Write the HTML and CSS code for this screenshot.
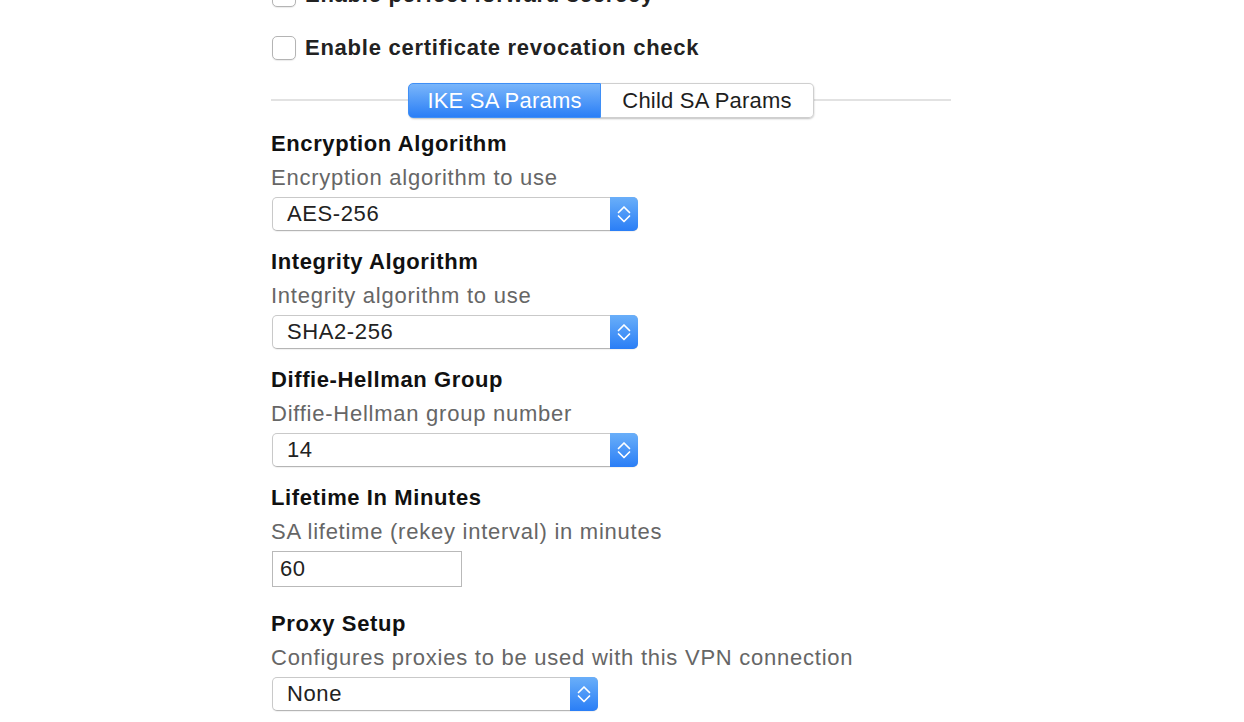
FILE: index.html
```html
<!DOCTYPE html>
<html lang="en">
<head>
    <meta charset="UTF-8">
    <meta name="viewport" content="width=device-width, initial-scale=1.0">
    <title>VPN Settings</title>
    <link rel="stylesheet" href="styles.css">
</head>
<body>

<div class="form">
    <label class="check-row">
        <span class="checkbox"></span>
        <span class="check-label">Enable perfect forward secrecy</span>
    </label>
    <label class="check-row">
        <span class="checkbox"></span>
        <span class="check-label">Enable certificate revocation check</span>
    </label>

    <div class="tabs">
        <div class="segmented">
            <span class="segment active">IKE SA Params</span>
            <span class="segment">Child SA Params</span>
        </div>
    </div>

    <div class="field">
        <div class="field-title">Encryption Algorithm</div>
        <div class="field-desc">Encryption algorithm to use</div>
        <div class="popup wide">
            <span class="popup-value">AES-256</span>
            <span class="popup-arrows">
                <svg width="14" height="20" viewBox="0 0 14 20"><path d="M1.5 8.5 L7 3 L12.5 8.5 M1.5 12 L7 17.5 L12.5 12" fill="none" stroke="#fff" stroke-width="1.7" stroke-linecap="round" stroke-linejoin="round"/></svg>
            </span>
        </div>
    </div>

    <div class="field">
        <div class="field-title">Integrity Algorithm</div>
        <div class="field-desc">Integrity algorithm to use</div>
        <div class="popup wide">
            <span class="popup-value">SHA2-256</span>
            <span class="popup-arrows">
                <svg width="14" height="20" viewBox="0 0 14 20"><path d="M1.5 8.5 L7 3 L12.5 8.5 M1.5 12 L7 17.5 L12.5 12" fill="none" stroke="#fff" stroke-width="1.7" stroke-linecap="round" stroke-linejoin="round"/></svg>
            </span>
        </div>
    </div>

    <div class="field">
        <div class="field-title">Diffie-Hellman Group</div>
        <div class="field-desc">Diffie-Hellman group number</div>
        <div class="popup wide">
            <span class="popup-value">14</span>
            <span class="popup-arrows">
                <svg width="14" height="20" viewBox="0 0 14 20"><path d="M1.5 8.5 L7 3 L12.5 8.5 M1.5 12 L7 17.5 L12.5 12" fill="none" stroke="#fff" stroke-width="1.7" stroke-linecap="round" stroke-linejoin="round"/></svg>
            </span>
        </div>
    </div>

    <div class="field">
        <div class="field-title">Lifetime In Minutes</div>
        <div class="field-desc">SA lifetime (rekey interval) in minutes</div>
        <div class="text-input">60</div>
    </div>

    <div class="field">
        <div class="field-title">Proxy Setup</div>
        <div class="field-desc">Configures proxies to be used with this VPN connection</div>
        <div class="popup narrow">
            <span class="popup-value">None</span>
            <span class="popup-arrows">
                <svg width="14" height="20" viewBox="0 0 14 20"><path d="M1.5 8.5 L7 3 L12.5 8.5 M1.5 12 L7 17.5 L12.5 12" fill="none" stroke="#fff" stroke-width="1.7" stroke-linecap="round" stroke-linejoin="round"/></svg>
            </span>
        </div>
    </div>
</div>

</body>
</html>
```

FILE: styles.css
```css
body {
    font-family: 'Liberation Sans', Arial, sans-serif;
    background: #fff;
    margin: 0;
    padding: 0;
    color: #222;
    overflow: hidden;
}
.form {
    width: 680px;
    margin: -17px 0 0 271px;
}
.check-row {
    display: flex;
    align-items: center;
    height: 24px;
    margin-bottom: 29px;
}
.check-row + .check-row {
    margin-bottom: 23px;
}
.checkbox {
    width: 22px;
    height: 22px;
    margin-left: 1px;
    border: 1px solid #b4b4b4;
    border-radius: 5px;
    background: #fff;
    box-shadow: 0 1px 1px rgba(0, 0, 0, 0.08);
}
.check-label {
    margin-left: 9px;
    font-size: 22px;
    font-weight: bold;
    letter-spacing: 0.75px;
    color: #222;
}
.tabs {
    display: flex;
    justify-content: center;
    align-items: center;
    height: 34px;
    margin-bottom: 15px;
    background: linear-gradient(#fff 16px, #e2e2e2 16px, #e2e2e2 18px, #fff 18px);
}
.segmented {
    display: flex;
    margin-left: 1px;
    border-radius: 5px;
    box-shadow: 0 1px 2px rgba(0, 0, 0, 0.25);
}
.segment {
    width: 212px;
    height: 33px;
    line-height: 33px;
    font-size: 22px;
    letter-spacing: 0.2px;
    text-align: center;
    background: #fff;
    border: 1px solid #cfcfcf;
    border-left: none;
    border-radius: 0 5px 5px 0;
    color: #1e1e1e;
}
.segment.active {
    width: 191px;
    margin-left: -1px;
    border: 1px solid #3f8ff6;
    border-radius: 5px 0 0 5px;
    background: linear-gradient(#7ab6fa, #2a7ef6);
    color: #fff;
}
.field {
    margin-bottom: 19px;
}
.field-title {
    font-size: 22px;
    font-weight: bold;
    letter-spacing: 0.6px;
    line-height: 24px;
    color: #111;
    margin-bottom: 10px;
}
.field-desc {
    font-size: 22px;
    letter-spacing: 0.75px;
    line-height: 24px;
    color: #666;
    margin-bottom: 7px;
}
.popup {
    display: flex;
    height: 34px;
    box-sizing: border-box;
    margin-left: 1px;
    border: 1px solid #c9c9c9;
    border-bottom-color: #b5b5b5;
    border-radius: 5px;
    background: #fff;
    box-shadow: 0 1px 1px rgba(0, 0, 0, 0.06);
}
.popup.wide {
    width: 366px;
}
.popup.narrow {
    width: 326px;
}
.popup-value {
    flex: 1;
    padding-left: 14px;
    font-size: 22px;
    letter-spacing: 0.6px;
    line-height: 32px;
    color: #222;
}
.popup-arrows {
    width: 28px;
    margin: -1px -1px -1px 0;
    display: flex;
    justify-content: center;
    align-items: center;
    border-radius: 0 5px 5px 0;
    background: linear-gradient(#6aaff9, #2a7ef6);
}
.text-input {
    width: 190px;
    height: 36px;
    box-sizing: border-box;
    margin-left: 1px;
    margin-bottom: 25px;
    padding-left: 7px;
    border: 1px solid #b9b9b9;
    font-size: 22px;
    letter-spacing: 0.6px;
    line-height: 34px;
    color: #222;
}
```
